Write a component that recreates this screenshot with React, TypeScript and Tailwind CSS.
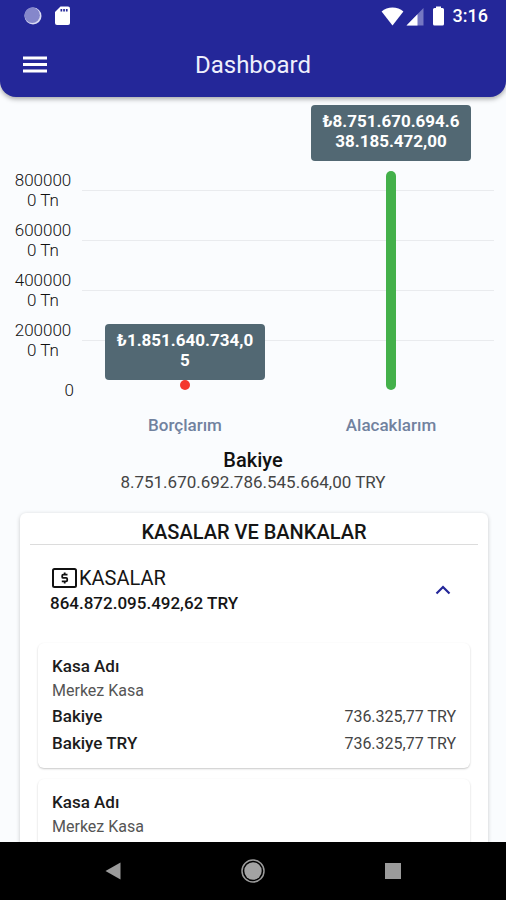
const NAVY = "#242799";

const ticks = ["800000", "600000", "400000", "200000"];

const bars = [
  { name: "Borçlarım", value: ["₺1.851.640.734,0", "5"], height: 10, gap: 0, color: "#f4372d" },
  { name: "Alacaklarım", value: ["₺8.751.670.694.6", "38.185.472,00"], height: 219, gap: 10, color: "#43b04a" },
];

type Kasa = { ad: string; bakiyeler: [string, string][] };

const kasalar: Kasa[] = [
  {
    ad: "Merkez Kasa",
    bakiyeler: [
      ["Bakiye", "736.325,77 TRY"],
      ["Bakiye TRY", "736.325,77 TRY"],
    ],
  },
  { ad: "Merkez Kasa", bakiyeler: [] },
];

function StatusBar() {
  return (
    <div className="flex h-8 items-center justify-between pl-6 pr-[18px]">
      <div className="flex items-center gap-3">
        <svg width="18" height="18" viewBox="0 0 18 18">
          <circle cx="9" cy="9" r="8.5" fill="#d9daf3" />
          <circle cx="8.2" cy="8.2" r="7.7" fill="#8587cb" />
        </svg>
        <svg width="18" height="20" viewBox="0 0 18 20">
          <path d="M6.5 .5H14a2 2 0 0 1 2 2V17a2 2 0 0 1-2 2H3a2 2 0 0 1-2-2V6z" fill="#fff" />
          <path d="M6.500 3h1.700v2.500H6.500zM9.200 3h1.700v2.500H9.200zM11.900 3h1.700v2.500h-1.700z" fill={NAVY} />
        </svg>
      </div>
      <div className="flex items-center text-white">
        <svg width="23" height="19" viewBox="0 0 23 19">
          <path d="M11.5 18.5.6 4.4C3.500 1.900 7.300.5 11.500.5s8 1.400 10.900 3.900z" fill="#fff" />
        </svg>
        <svg className="ml-0.5" width="18" height="19" viewBox="0 0 18 19">
          <path d="M17.500 1v17.500H.5z" fill="#7577c2" />
          <path d="M11.500 7.200v11.300H.5z" fill="#fff" />
        </svg>
        <svg className="ml-2" width="13" height="20" viewBox="0 0 13 20">
          <path d="M4 .5h5V2h1.500A1.500 1.500 0 0 1 12 3.500V18a1.500 1.500 0 0 1-1.500 1.500h-8A1.500 1.500 0 0 1 1 18V3.500A1.500 1.500 0 0 1 2.500 2H4z" fill="#fff" />
        </svg>
        <span className="ml-2 text-lg font-medium leading-5">3:16</span>
      </div>
    </div>
  );
}

function AppBar() {
  return (
    <div className="grid h-[65px] grid-cols-[1fr_auto_1fr] items-center px-[23px]">
      <button type="button" aria-label="Menü" className="w-6">
        <svg width="24" height="17" viewBox="0 0 24 17" fill="#fff">
          <path d="M0 .5h24v3H0zM0 7h24v3H0zM0 13.500h24v3H0z" />
        </svg>
      </button>
      <h1 className="text-2xl font-normal text-[#eeeffc]">Dashboard</h1>
    </div>
  );
}

function Chart() {
  return (
    <section className="flex items-end px-3 pt-2">
      {/* Dikey eksen */}
      <div className="w-[70px] pr-2 text-center text-[17px] font-light leading-5 text-[#111]">
        {ticks.map((t) => (
          <div key={t} className="mb-[10px]">
            {t}
            <br />0 Tn
          </div>
        ))}
        <div className="pt-[10px] text-right">0</div>
      </div>

      <div className="grid flex-1 pb-[10px]">
        <div className="col-start-1 row-start-1 self-end">
          {ticks.map((t) => (
            <div key={t} className="h-[50px] border-t border-[#e9ebee]" />
          ))}
        </div>
        <div className="col-start-1 row-start-1 grid grid-cols-2">
          {bars.map((b) => (
            <div key={b.name} className="flex flex-col items-center justify-end">
              <div
                className="h-14 w-40 rounded bg-[#526873] pt-1.5 text-center text-[17px] font-bold leading-5 text-white"
                style={{ marginBottom: b.gap }}
              >
                {b.value[0]}
                <br />
                {b.value[1]}
              </div>
              <div
                className="w-[10px] rounded-full"
                style={{ height: b.height, backgroundColor: b.color }}
              />
            </div>
          ))}
        </div>
      </div>
    </section>
  );
}

function KasaCard({ k }: { k: Kasa }) {
  return (
    <article className="min-h-[125px] rounded-md bg-white px-[14px] pt-[10px] shadow-[0_1px_2px_rgba(0,0,0,0.22)]">
      <h4 className="text-[17px] font-medium leading-[26px] text-[#1c1c1c]">Kasa Adı</h4>
      <p className="text-base leading-6 text-[#555]">{k.ad}</p>
      <dl>
        {k.bakiyeler.map(([label, tutar]) => (
          <div key={label} className="flex items-baseline justify-between">
            <dt className="text-[17px] font-medium leading-[27px] text-[#1c1c1c]">{label}</dt>
            <dd className="text-base leading-[27px] text-[#444]">{tutar}</dd>
          </div>
        ))}
      </dl>
    </article>
  );
}

function NavBar() {
  return (
    <nav className="grid h-[58px] shrink-0 grid-cols-[1fr_auto_1fr] items-center bg-black">
      <button type="button" aria-label="Geri" className="ml-[105px] w-4">
        <svg width="16" height="18" viewBox="0 0 16 18">
          <path d="M15.500.5v17L.5 9z" fill="#9b9b9b" />
        </svg>
      </button>
      <button type="button" aria-label="Ana ekran">
        <svg width="24" height="24" viewBox="0 0 24 24">
          <circle cx="12" cy="12" r="11" fill="none" stroke="#9b9b9b" strokeWidth="1.500" />
          <circle cx="12" cy="12" r="8.700" fill="#a3a3a3" />
        </svg>
      </button>
      <button
        type="button"
        aria-label="Son uygulamalar"
        className="mr-[105px] size-4 justify-self-end bg-[#9b9b9b]"
      />
    </nav>
  );
}

export default function App() {
  return (
    <div className="flex h-screen flex-col overflow-hidden bg-[#fafcfe] font-['Roboto',sans-serif]">
      <header className="shrink-0 rounded-b-2xl bg-[#242799] shadow-[0_2px_5px_rgba(0,0,0,0.35)]">
        <StatusBar />
        <AppBar />
      </header>

      <main className="min-h-0 flex-1 overflow-hidden">
        <Chart />
        <div className="ml-[82px] mr-3 mt-[13px] grid grid-cols-2 text-center text-[17px] font-medium leading-6 text-[#71829f]">
          {bars.map((b) => (
            <span key={b.name}>{b.name}</span>
          ))}
        </div>

        <section className="mt-3 text-center">
          <h2 className="text-xl font-medium leading-[22px] text-[#111]">Bakiye</h2>
          <p className="text-[17px] leading-[22px] text-[#444]">
            8.751.670.692.786.545.664,00 TRY
          </p>
        </section>

        <section className="ml-5 mr-[18px] mt-5 rounded-md bg-white px-[10px] pb-6 pt-[7px] shadow-[0_1px_4px_rgba(0,0,0,0.2)]">
          <h2 className="border-b border-[#dcdcdc] text-center text-xl font-medium leading-6 text-[#151515]">
            KASALAR VE BANKALAR
          </h2>
          <div className="flex items-center justify-between pl-5 pr-[27px] pt-5">
            <div className="text-[#151515]">
              <h3 className="flex items-center gap-0.5 pl-0.5 text-xl font-normal leading-[26px]">
                <svg width="25" height="20" viewBox="0 0 25 20" fill="none" stroke="#111">
                  <rect x="1" y="1" width="23" height="18" rx="1.500" strokeWidth="2" />
                  <path
                    d="M15.500 6.700h-4.300a1 1 0 0 0-1 1v1.200a1 1 0 0 0 1 1h3a1 1 0 0 1 1 1v1.400a1 1 0 0 1-1 1H9.800M12.700 4.500v2M12.700 13.500v2"
                    strokeWidth="1.800"
                  />
                </svg>
                KASALAR
              </h3>
              <p className="text-[17px] font-medium leading-6">864.872.095.492,62 TRY</p>
            </div>
            <button type="button" aria-label="Kasaları daralt">
              <svg width="16" height="10" viewBox="0 0 16 10" fill="none" stroke={NAVY} strokeWidth="2.200">
                <path d="M1.500 8.500 8 2l6.500 6.500" />
              </svg>
            </button>
          </div>
          <div className="mx-2 mt-7 flex flex-col gap-[11px]">
            {kasalar.map((k, i) => (
              <KasaCard key={i} k={k} />
            ))}
          </div>
        </section>
      </main>

      <NavBar />
    </div>
  );
}
